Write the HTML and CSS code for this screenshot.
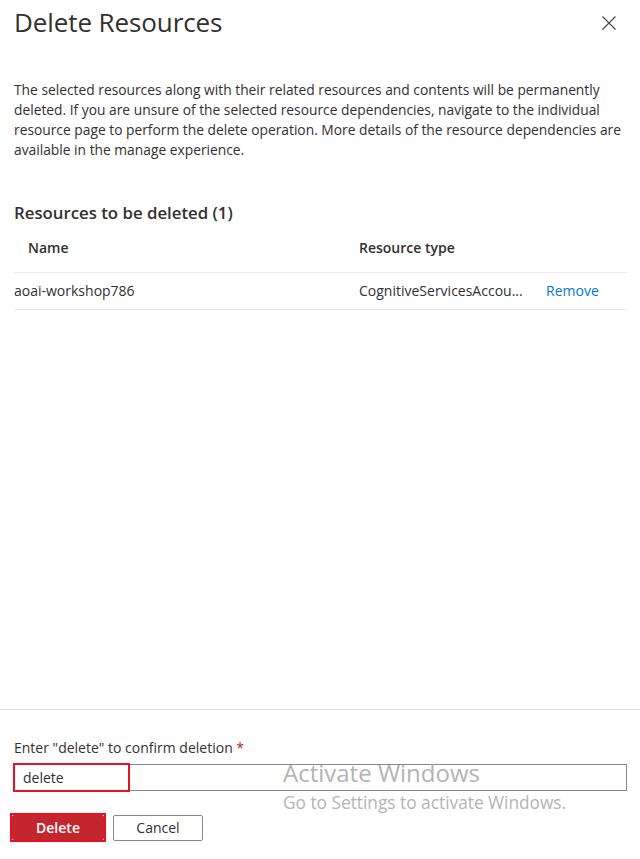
FILE: index.html
```html
<!DOCTYPE html>
<html>
<head>
<meta charset="utf-8">
<link rel="stylesheet" href="styles.css">
</head>
<body>
<div class="panel">
  <header class="head">
    <h1 class="title">Delete Resources</h1>
    <button class="close" aria-label="Close">
      <svg width="14" height="14" viewBox="0 0 14 14"><path d="M0.5 0.5 L13.5 13.5 M13.5 0.5 L0.5 13.5" stroke="#444" stroke-width="1.1" fill="none"/></svg>
    </button>
  </header>
  <main class="content">
    <p class="desc">The selected resources along with their related resources and contents will be permanently deleted. If you are unsure of the selected resource dependencies, navigate to the individual resource page to perform the delete operation. More details of the resource dependencies are available in the manage experience.</p>
    <h2 class="subtitle">Resources to be deleted (1)</h2>
    <div class="table">
      <div class="row hdr">
        <div class="c-name hname">Name</div>
        <div class="c-type">Resource type</div>
        <div class="c-act"></div>
      </div>
      <div class="row item">
        <div class="c-name">aoai-workshop786</div>
        <div class="c-type ell">CognitiveServicesAccou...</div>
        <div class="c-act"><a class="link">Remove</a></div>
      </div>
    </div>
  </main>
  <footer class="foot">
    <label class="lbl">Enter "delete" to confirm deletion <span class="req">*</span></label>
    <div class="inputwrap">
      <div class="input">delete</div>
      <div class="mark-input"></div>
      <div class="wm">
        <div class="wm1">Activate Windows</div>
        <div class="wm2">Go to Settings to activate Windows.</div>
      </div>
    </div>
    <div class="btns">
      <div class="delwrap"><button class="btn primary">Delete</button></div>
      <button class="btn secondary">Cancel</button>
    </div>
  </footer>
</div>
</body>
</html>
```
FILE: styles.css
```css
* { box-sizing: border-box; }
html, body { margin: 0; padding: 0; background: #fff; }
body { font-family: "Open Sans", "Noto Sans", Arial, sans-serif; color: #323130; font-size: 14px; }
.panel { width: 640px; height: 859px; display: flex; flex-direction: column; }
.head { display: flex; justify-content: space-between; align-items: flex-start; padding: 4px 24px 0 14px; height: 44px; }
.title { margin: 0; font-size: 26px; font-weight: 400; line-height: 36px; letter-spacing: -0.1px; color: #323130; }
.close { border: 0; background: none; padding: 0; margin-top: 12px; width: 14px; height: 14px; display: flex; }
.content { flex: 1; padding: 0 13px 0 14px; }
.desc { margin: 36px 0 0; line-height: 20px; font-size: 13.8px; }
.subtitle { margin: 42px 0 0; font-size: 16.8px; font-weight: 600; line-height: 22px; }
.table { margin-top: 4px; }
.row { display: flex; align-items: center; }
.hdr { height: 44px; padding-bottom: 6px; font-weight: 600; }
.item { height: 38px; padding-bottom: 2px; border-top: 1px solid #edebe9; border-bottom: 1px solid #edebe9; }
.c-name { width: 345px; }
.hname { padding-left: 14px; }
.c-type { width: 187px; }
.ell { white-space: nowrap; overflow: hidden; }
.c-act { flex: 1; }
.link { color: #0078d4; }
.foot { border-top: 1px solid #e1dfdd; height: 150px; padding: 28px 13px 0 13px; }
.lbl { display: block; line-height: 20px; padding-left: 1px; font-size: 14px; }
.req { color: #a4262c; }
.inputwrap { position: relative; margin-top: 6px; }
.input { height: 27px; border: 1px solid #8a8886; padding: 0 9px; line-height: 25px; }
.mark-input { position: absolute; left: 0; top: -1px; width: 117px; height: 29px; border: 2px solid #e81123; }
.wm { position: absolute; left: 270px; top: -6px; color: #b4b4b4; pointer-events: none; }
.wm1 { font-size: 24px; line-height: 30px; }
.wm2 { font-size: 17.3px; line-height: 24px; margin-top: 3px; }
.btns { display: flex; gap: 7px; margin-top: 22px; margin-left: -3px; align-items: center; }
.delwrap { border: 2px solid #e81123; padding: 0; }
.btn { font-family: inherit; font-size: 14px; height: 26px; padding: 0; border-radius: 2px; }
.primary { background: #c4262e; color: #fff; border: 1px solid #c4262e; font-weight: 600; width: 92px; height: 25px; }
.secondary { background: #fff; color: #323130; border: 1px solid #8a8886; width: 90px; }
```
